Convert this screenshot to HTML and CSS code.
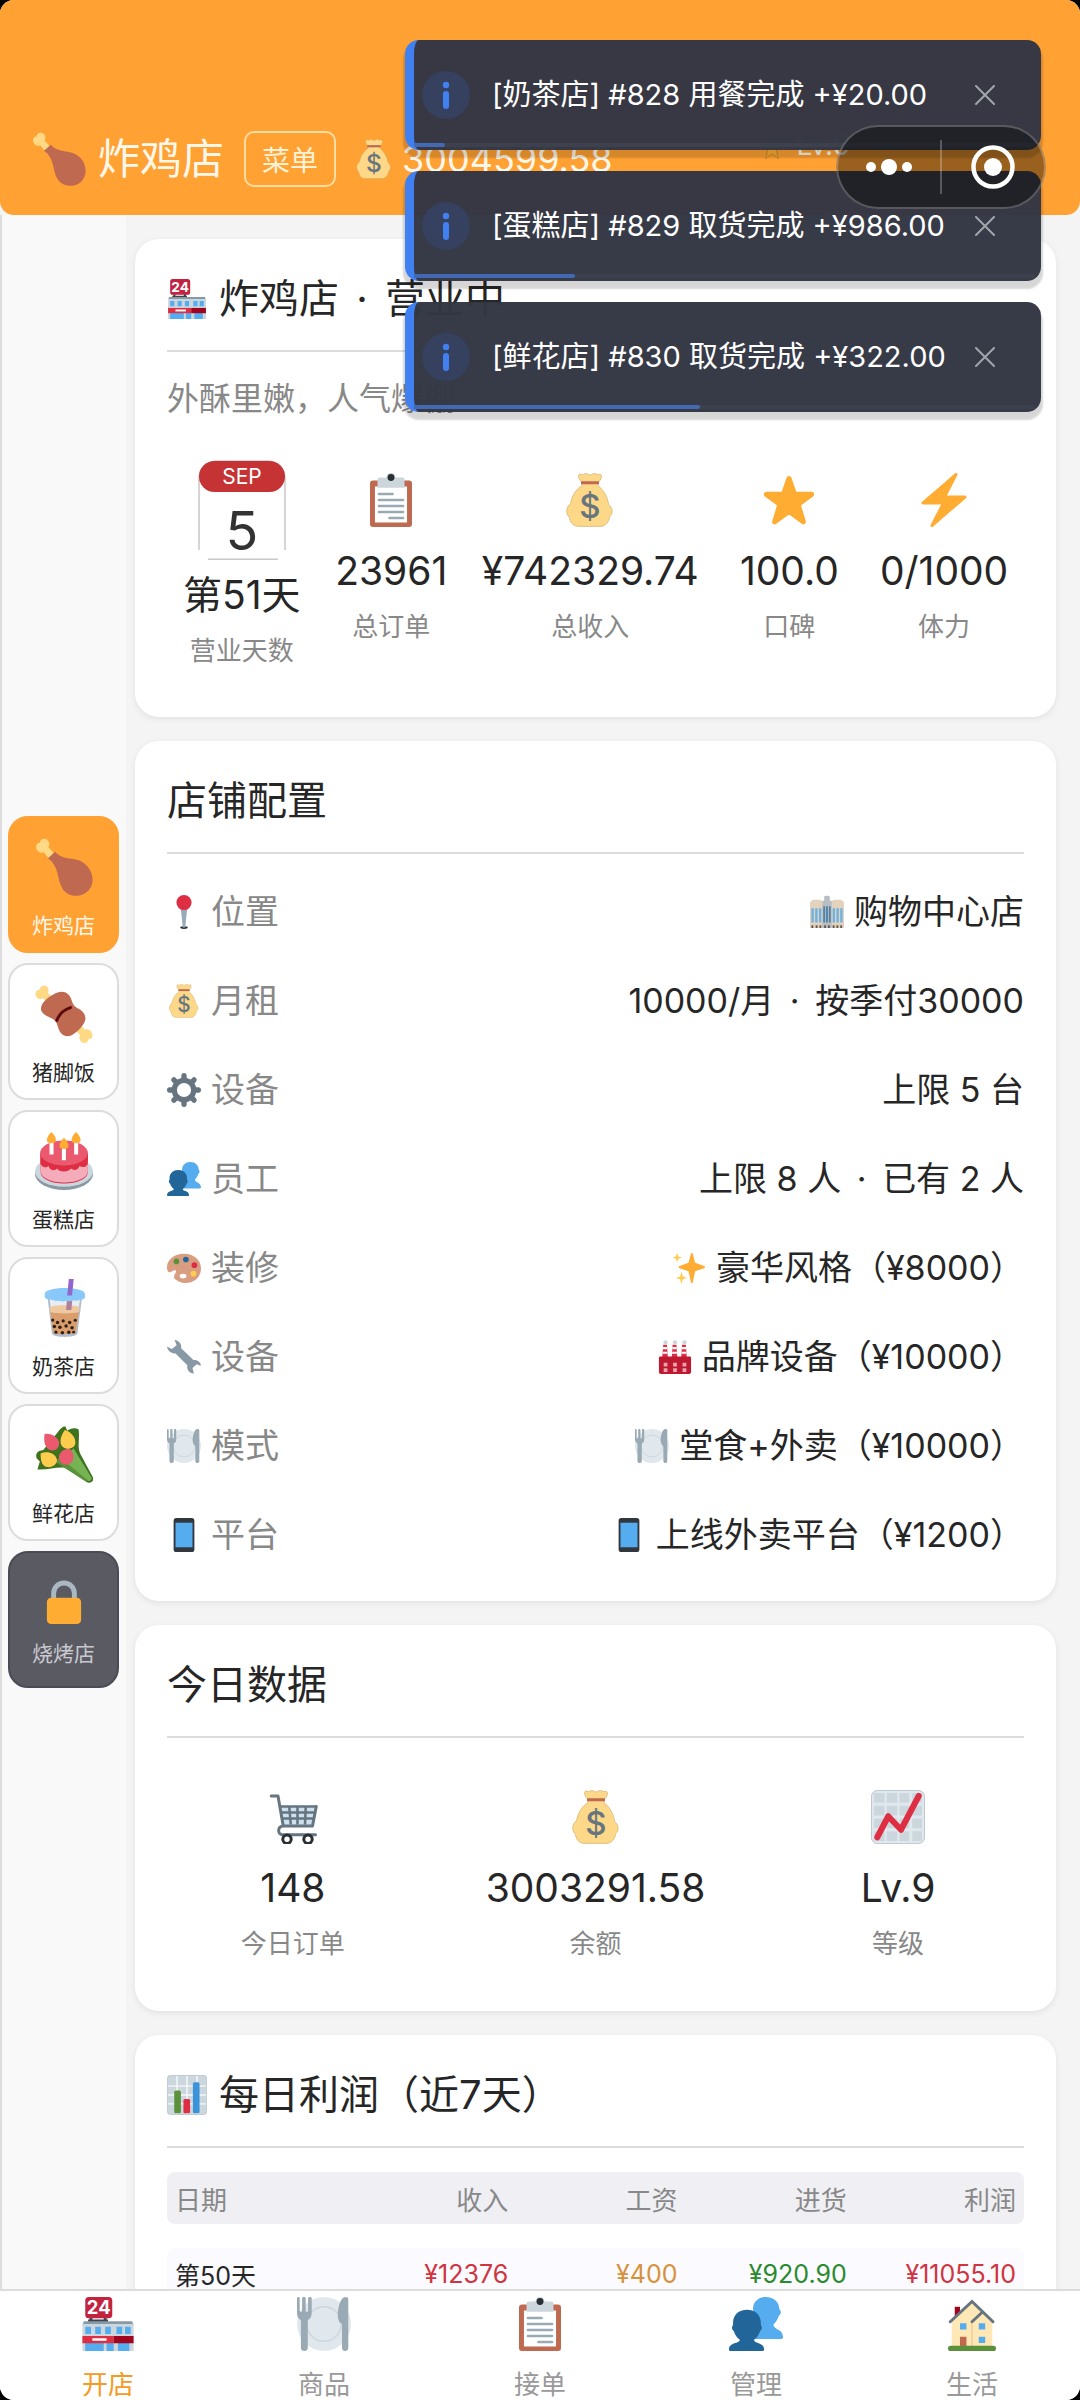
FILE: index.html
```html
<!DOCTYPE html>
<html lang="zh-CN">

<head>
    <meta charset="UTF-8">
    <meta name="viewport" content="width=device-width, initial-scale=1.0">
    <title>炸鸡店 - 营业中</title>
    <link rel="stylesheet" href="styles.css">
</head>

<body>
    <!-- 图标 -->
    <svg class="sprite" aria-hidden="true">
        <symbol id="i-chicken" viewBox="0 0 36 36">
            <path fill="#FFD983" d="M1 7c-1-2 0-4 2-4 0-2.500 3.500-3.500 5-1.500 1.300 1.500 1 3 .3 4.200l6 6.300-3.500 3.500L5.500 8.800C4 9.700 2 9.200 1 7z" />
            <path fill="#BE6950" d="M8 12.500l4.500-4c2 2.500 5 3.600 9 4.300 3 .5 7 .7 10.500 4.200 4 4 5.400 11 1.200 15.600-4.300 4.700-12 4.200-15.600-.4-3-4-2.900-9.700-5-14.200-1-2.200-2.600-4-4.600-5.500z" />
        </symbol>
        <symbol id="i-meat" viewBox="0 0 36 36">
            <path fill="#FFD983" d="M.5 6.800C-.2 4.600 1 3 2.800 3c.2-2.400 3-3.500 4.600-2 1.300 1.200 1.200 2.600.7 3.900L13 10l-3 3.500-5-5.300c-1.600.8-3.800.6-4.500-1.400zM35.500 30.200c.7 2.200-.5 3.500-2.300 3.500-.2 2.300-3 3-4.600 1.300-1.300-1.200-1.200-2.600-.7-3.900L23 26l3-3.500 5 5.300c1.600-.8 3.800.3 4.500 2.400z" />
            <path fill="#BE6950" d="M14 4.700c4-1.700 7.500.6 8.600 4.300.8 2.800 1.600 4.300 4.400 5.700 3.800 1.900 5.400 5.600 3.500 8.900-1.700 2.900-3.900 5.100-7 7.200-3.500 2.400-7.700.4-8.900-3.600-.9-2.900-1.200-4.900-4.300-6.500-3.600-1.900-7.500-3.100-6.400-7.300 1-3.600 6-7.200 10.100-8.700z" />
            <path fill="none" stroke="#5C0A0D" stroke-width="1.800" stroke-linecap="round" d="M13.500 22c1.500-4 4.500-6.700 8.500-8" />
        </symbol>
        <symbol id="i-cake" viewBox="0 0 36 36">
            <ellipse cx="18" cy="26" rx="18" ry="10" fill="#8899A6" />
            <ellipse cx="18" cy="24.500" rx="18" ry="9.500" fill="#CCD6DD" />
            <path fill="#DD2E44" d="M3.500 13v12c0 4 6.500 7 14.500 7s14.800-3 14.800-7V13z" />
            <path fill="#F4ABBA" d="M3.500 18v6.300c0 4 6.500 7 14.500 7s14.800-3 14.800-7V18z" />
            <path fill="#DD2E44" d="M3.300 13v6.500c1 2.500 3.600 3 5.100 1.600 1 3 3.900 3.200 5.300 1.600 1.200 2.400 7.200 2.400 8.600 0 1.800 1.600 4.500 1 5.300-1.600 2 1.400 4.500.5 5.200-1.600V13z" />
            <ellipse cx="18" cy="13" rx="14.800" ry="7.800" fill="#EA596E" />
            <path fill="#FFF" d="M9 6h2.500v8H9zM24.300 6h2.500v8h-2.500zM16.700 9.500h2.500v8h-2.500z" />
            <path fill="#FFAC33" d="M10.200 0c4 4 3.500 7 0 7s-4-3 0-7zM25.500 0c4 4 3.500 7 0 7s-4-3 0-7zM18 3.500c4 4 3.500 7 0 7s-4-3 0-7z" />
        </symbol>
        <symbol id="i-tea" viewBox="0 0 36 36">
            <path fill="#B4BDC6" d="M7.500 9h22l-3.200 25c-1 2.600-14.800 2.600-15.800 0z" />
            <path fill="#E7EDF2" d="M9 12h19l-1.300 10h-16.300z" />
            <path fill="#D99E6B" d="M9.500 19.500c3 1 14.800 1 17.800 0L25.300 33c-2 1.600-12 1.600-14 0z" />
            <path fill="#EEC9A0" d="M9.100 17.500c3-1.600 15.600-1.600 18.600 0l-.4 3c-4 1.200-13.800 1.200-17.800 0z" />
            <path fill="#B07F9B" d="M19.800 13h3.300l-.5 6.200h-3.300z" />
            <g fill="#31201A">
                <circle cx="11" cy="25.500" r="1" /><circle cx="14" cy="27" r="1.100" /><circle cx="17.500" cy="26" r="1" /><circle cx="21.500" cy="27" r="1.100" /><circle cx="25" cy="25.600" r="1" />
                <circle cx="12" cy="29.500" r="1.100" /><circle cx="15.500" cy="30" r="1.100" /><circle cx="19.300" cy="29.200" r="1.100" /><circle cx="23" cy="30.200" r="1.100" /><circle cx="13" cy="33" r="1" />
                <circle cx="17" cy="33.300" r="1.100" /><circle cx="21" cy="33" r="1.100" /><circle cx="24" cy="33" r=".9" />
            </g>
            <path fill="#88C9F9" d="M6 9.500C6 7 11.300 5.600 18.500 5.600S31 7 31 9.500v2.200c-1.500 1.700-2.700 1-4 1.500-1.300.6-3-.2-4.500.4-1.700.6-3-.4-4.600.2-1.400.4-3-.5-4.400-.2-1.600.2-2.700-.8-4-.8-1.600 0-3-.4-3.500-1.600z" />
            <path fill="#9266CC" d="M21 0h3l-1 10.200h-3z" />
        </symbol>
        <symbol id="i-flowers" viewBox="0 0 36 36">
            <path fill="#3E721D" d="M1 20C0 17 2 15 5 15L14 4c2-3 4-4 5-3.500L20 3c2-2 5-2 7-1 1 6-1 10 1 15l8 15c.8 2.500-2 4-4 2.700L19 26c-5-1-11 1.500-17.500 1L3 22z" />
            <path fill="#77B255" d="M14 21l10-7 11 18c.6 2-1.300 2.700-3 1.800z" />
            <path fill="#5C913B" d="M12 22l4-2 17 13.800c-1 .6-2 .3-3-.4z" />
            <path fill="#EA596E" d="M6 5c3-.8 7 1.200 8.500 3.800 1.600 3.300-.8 6.400-3.600 6.400C6.500 15.200 5 10 6 5zM23 16c1.800 3 .8 7.500-3.200 8-3.600.4-5.800-3.400-4.600-6.300C16.500 15 19 14 21.500 14.300z" />
            <path fill="#FFCC4D" d="M18.500 2.500C23 4 25.500 7.500 25 11c-.5 2.800-5 4.200-7.700 2-2.800-2.700-1-7.200 1.200-10.500zM3.500 17c4-1.600 9-.2 10 3.500.9 3.200-3 5.600-6 5C4 24.600 3.500 21 3.500 17z" />
        </symbol>
        <symbol id="i-lock" viewBox="0 0 28 36">
            <path fill="none" stroke="#AAB8C2" stroke-width="4" d="M5.500 17v-6a8.500 8.500 0 0 1 17 0v6" />
            <rect x="0" y="14.500" width="28" height="21.500" rx="3.500" fill="#FFAC33" />
        </symbol>
        <symbol id="i-bag" viewBox="0 0 36 36">
            <path fill="#FDD888" stroke="#C9A861" stroke-width=".4" d="M13 6.500c-2-1.500-3.300-4-2.300-5.500 1-.9 2.200.4 3 0 1.200-.9 2.300-.9 3.300 0 .7.400 1.500.400 2.200 0 1-.9 2.500-.9 3.500 0 .9.300 2-.6 2.700.3.800 1.700-.6 3.800-2.200 5.200l.3 2c4.500 3.500 6.600 9 6.900 12.500 3 2.300 3.100 6.200.8 8-.4 3.500-3 6.600-6 6.600H10.500c-3.600 0-6-2.700-6.200-6C1.500 27 2 22.500 5 20.500c.8-5 3.500-9.500 7.500-12z" />
            <path fill="#BF6952" d="M12 5.500h12v2H12z" />
            <text class="coin" x="18" y="30" text-anchor="middle">$</text>
        </symbol>
        <symbol id="i-store" viewBox="0 0 36 38">
            <path fill="#3B4650" d="M5 14h2v4H5zM15 14h2v4h-2zM4 15.800h14v1.800H4z" />
            <rect x="2" y="0" width="19" height="15" rx="2.500" fill="#C3233F" />
            <text class="sign" x="11.500" y="12.200" text-anchor="middle">24</text>
            <path fill="#8899A6" d="M1 17h34l1 3H0z" />
            <path fill="#CCD6DD" d="M0 19h36v19H0z" />
            <path fill="#55ACEE" d="M2 21h4v5H2zM9 21h4v5H9zM16 21h4v5h-4zM24 21h4v5h-4zM30 21h4v5h-4zM2 32h13v6H2zM17 32h5v6h-5zM25 32h8v6h-8z" />
            <path fill="#DD2E44" d="M0 27.500h22v5H0z" />
            <path fill="#A0041E" d="M22 27.500h14v5H22z" />
            <path fill="#FFF" d="M7 29h10v1.800H7z" />
        </symbol>
        <symbol id="i-calendar" viewBox="0 0 88 112">
            <path fill="none" stroke="#C8C8C8" stroke-width="1.500" d="M1 102V32C1 20 8 13 20 13h48c12 0 19 7 19 19v70M10 111.200h70" />
            <rect x="1" y="13" width="86" height="31" rx="15.500" fill="#C53334" />
            <text class="cal-month" x="44" y="36" text-anchor="middle">SEP</text>
            <text class="cal-day" x="44" y="102" text-anchor="middle">5</text>
        </symbol>
        <symbol id="i-clipboard" viewBox="0 0 36 36">
            <rect x="4" y="5" width="28" height="31" rx="2" fill="#BE6950" />
            <path fill="#FFF" d="M7.300 9h21.400v24H7.300z" />
            <path fill="#CCD6DD" d="M9 4.500c0-1 .6-1.500 1.500-1.500H15a3 3 0 0 1 6 0h4.500c.9 0 1.500.5 1.500 1.500V9.800H9z" />
            <circle cx="18" cy="3" r="2.300" fill="#292F33" />
            <path stroke="#99AAB5" stroke-width="1.800" stroke-linecap="round" d="M10 14h9M10 18h16M10 22h16M10 26h16M17 30h9" />
        </symbol>
        <symbol id="i-star" viewBox="0 0 36 36">
            <path fill="#FFAC33" stroke="#FFAC33" stroke-width="3.500" stroke-linejoin="round" d="M18 3.800l3.600 10.400H33l-9 6.800 3.500 11.500-9.500-7-9.500 7L12 21l-9-6.800h11.400z" />
        </symbol>
        <symbol id="i-bolt" viewBox="0 0 36 36">
            <path fill="#FFAC33" d="M32.938 15.651C32.792 15.260 32.418 15 32 15H19.925L26.890 1.458c.219-.426.106-.947-.271-1.243C26.437.071 26.218 0 26 0c-.233 0-.466.082-.653.243L18 6.588 3.347 19.243c-.316.273-.43.714-.284 1.105S3.582 21 4 21h12.075L9.110 34.542c-.219.426-.106.947.271 1.243.182.144.401.215.619.215.233 0 .466-.082.653-.243L18 29.412l14.653-12.655c.317-.273.430-.714.285-1.106z" />
        </symbol>
        <symbol id="i-pin" viewBox="0 0 36 36">
            <ellipse cx="18" cy="34.500" rx="4" ry="1.500" fill="#292F33" />
            <path fill="#99AAB5" d="M14.700 15h6.600L19.300 34.500h-2.600z" />
            <circle cx="18" cy="8" r="8" fill="#DD2E44" />
        </symbol>
        <symbol id="i-gear" viewBox="0 0 36 36">
            <circle cx="18" cy="18" r="10.300" fill="none" stroke="#66757F" stroke-width="5.600" />
            <path stroke="#66757F" stroke-width="5.600" stroke-linecap="round" d="M18 2.800V6M18 30v3.200M2.800 18H6M30 18h3.200M7.300 7.300l2.200 2.200M26.500 26.500l2.200 2.200M7.300 28.700l2.200-2.200M26.500 9.500l2.200-2.200" />
        </symbol>
        <symbol id="i-people" viewBox="0 0 36 36">
            <path fill="#55ACEE" d="M24.500 0c5.500 0 9 3.500 9 8 1.300 1 1.500 3.200-.2 4.400-.8 2.600-2 4.400-3.700 6 0 3.600 6.400 2.800 6.400 8.400 0 .8-.6 1.200-1.400 1.200H17L16 8c0-4.500 3.500-8 8.500-8z" />
            <path fill="#226699" d="M12 8.500c5.500 0 9.200 3.600 9.200 8.500v1.700c1.200 1.300.7 3.500-.5 4-.6 2.300-2 4.300-4 5.800 0 2.800 6.700 1.500 6.700 6.500 0 .7-.5 1-1.200 1H1.200C.5 36 0 35.700 0 35c0-5 7.200-3.800 7.200-6.500-2-1.500-3.400-3.500-4-5.800-1.200-.5-1.700-2.700-.5-4V17c0-4.900 3.800-8.500 9.300-8.500z" />
        </symbol>
        <symbol id="i-palette" viewBox="0 0 36 36">
            <path fill="#D99E82" d="M18 3C7.600 3 0 9.500 0 17c0 2 .3 4.200 1.500 5.200 2 1.500 4.500-1.600 6.700-1.800 2.500 0 1 3-.2 4.800-1 1.800-.7 3.800 1.500 5.300C12 32.500 15 34 19 34c10 0 17-6.500 17-15.500S28.400 3 18 3z" />
            <circle cx="10" cy="11" r="3" fill="#5C913B" /><circle cx="20" cy="9" r="3" fill="#226699" />
            <circle cx="29" cy="15" r="3" fill="#DD2E44" /><circle cx="28" cy="24" r="3" fill="#FFCC4D" />
            <ellipse cx="17" cy="26.500" rx="3.600" ry="2.500" fill="#FFF" />
        </symbol>
        <symbol id="i-wrench" viewBox="0 0 36 36">
            <path fill="#8899A6" d="M8 0c4.500.5 7.700 4 7 8.700l13 12.500c4-.5 7.500 2 8 6l-4.500-1.600-4.500 4 1.500 5.800c-5-.2-7.700-4-7-8.700L9 14.200C4.600 14.700.6 11.500 0 7l5 2.500 5.200-4z" />
        </symbol>
        <symbol id="i-plate" viewBox="0 0 36 36">
            <circle cx="18" cy="18" r="18" fill="#E1E8ED" />
            <circle cx="18" cy="18" r="11.500" fill="#E1E8ED" stroke="#CCD6DD" stroke-width="1" />
            <path fill="#9AAAB4" d="M0 .8c0-1 1.800-1 1.800 0v8.500c.4.700 1 .7 1.600.4V.8c0-1 2.400-1 2.400 0v8.900c.6.300 1.200.3 1.600-.4V.8c0-1 2.400-1 2.400 0v10c0 2.200-1 3.700-2.600 4.600v18.400c0 2.900-4.600 2.900-4.600 0V15.400C1 14.500 0 13 0 10.800zM34.200 1.500v32.300c0 2.900-4.200 2.900-4.200 0V18c-2.200-1-2.800-3.500-2.800-6 0-5 1.800-12 5-12 1.300 0 2 .5 2 1.500z" />
        </symbol>
        <symbol id="i-phone" viewBox="0 0 36 36">
            <rect x="7" y="0" width="22" height="36" rx="3" fill="#31373D" />
            <path fill="#55ACEE" d="M9 5h18v26H9z" />
        </symbol>
        <symbol id="i-mall" viewBox="0 0 36 36">
            <path fill="#E3D3BE" d="M0 8c1-2 2.500-3 4-3h6c1.500 0 2.500 1 3 2h10c.5-1 1.500-2 3-2h6c1.500 0 3 1 4 3v27H0z" />
            <path fill="#B9BEC2" d="M13 6h2V1.500C16 .5 20 .5 21 1.500V6h2v29H13z" />
            <path fill="#6CB2E2" d="M1.500 14H4v15H1.500zM5.500 14H8v15H5.500zM9.500 14H12v15H9.500zM24 14h2.500v15H24zM28 14h2.500v15H28zM32 14h2.500v15H32z" />
            <path fill="#5283A8" d="M14 12h2v17h-2zM17 12h2v17h-2zM20 12h2v17h-2z" />
            <path fill="#665A50" d="M1.500 32h2v3h-2zM6 32h2v3H6zM10 32h2v3h-2zM15 32h2v3h-2zM19 32h2v3h-2zM24 32h2v3h-2zM28 32h2v3h-2zM32 32h2v3h-2z" />
        </symbol>
        <symbol id="i-sparkle" viewBox="0 0 36 36">
            <path fill="#FFAC33" d="M21 2c.5 0 .9.500 1 1l2.500 9.500L34 15.800c.6.200 1 .6 1 1.200s-.4 1-1 1.200l-9.500 3.300L22 33c-.1.500-.5 1-1 1s-.9-.5-1-1l-2.500-11.500L8 18.200c-.6-.2-1-.6-1-1.200s.4-1 1-1.200l9.500-3.300L20 3c.1-.5.5-1 1-1z" />
            <path fill="#FFCC4D" d="M5.500 2l1.300 3.700L10.500 7 6.800 8.300 5.500 12 4.200 8.300.5 7l3.700-1.300zM10 22l1.500 5 4.500 1.500-4.500 1.500L10 35l-1.500-5L4 28.500 8.500 27z" />
        </symbol>
        <symbol id="i-factory" viewBox="0 0 36 36">
            <path fill="#DD2E44" d="M5.500 5h4l1 14h-6zM15.500 5h4l1 14h-6zM25.500 5h4l1 14h-6z" />
            <path fill="#FFF" d="M5.300 7.500h4.400v2.200H5.300zM5 12.500h5v2H5zM15.300 7.500h4.400v2.200h-4.400zM15 12.500h5v2h-5zM25.300 7.500h4.400v2.200h-4.400zM25 12.500h5v2h-5z" />
            <g fill="#CCD6DD"><circle cx="8" cy="2.500" r="2.300" /><circle cx="18" cy="2.500" r="2.300" /><circle cx="28" cy="2.500" r="2.300" /></g>
            <path fill="#BE1931" d="M1 19c0-1 .7-1.500 1.500-1.500h31c.8 0 1.500.5 1.500 1.500v15c0 1.200-.8 2-2 2H3c-1.200 0-2-.8-2-2z" />
            <path fill="#E8A2AD" d="M6 24h4v4H6zM16 24h4v4h-4zM26 24h4v4h-4zM6 30h4v4H6zM16 30h4v4h-4zM26 30h4v4h-4z" />
        </symbol>
        <symbol id="i-cart" viewBox="0 0 36 36">
            <path fill="#CCE0EE" d="M9.500 10.500H33l-2 13.500H11z" />
            <path fill="none" stroke="#66757F" stroke-width="1.700" d="M10 11h23.500M10.300 15h22.500M10.800 19h21.500M15.500 11l1 12M21 11v12M26.500 11l-.5 12" />
            <path fill="none" stroke="#66757F" stroke-width="2" stroke-linecap="round" stroke-linejoin="round" d="M3.500 4H8l3.500 20H31l2.500-13M11.500 24c-4 0-4 5.800-.5 5.800h22" />
            <g fill="#FFF" stroke="#292F33" stroke-width="2"><circle cx="14" cy="32.800" r="2.800" /><circle cx="28" cy="32.800" r="2.800" /></g>
        </symbol>
        <symbol id="i-trend" viewBox="0 0 36 36">
            <rect x=".3" y=".3" width="35.400" height="35.400" rx="4" fill="#E1E8ED" stroke="#99AAB5" stroke-width=".4" />
            <path fill="#CCD6DD" d="M2 2h7v6.500H2zM10.500 2h7v6.500h-7zM19 2h6.500v6.500H19zM27.500 2h6.500v6.500h-6.500zM2 10.500h7v6.500H2zM10.500 10.500h7v6.500h-7zM19 10.500h6.500v6.500H19zM27.500 10.500h6.500v6.500h-6.500zM2 19h7v6.500H2zM10.500 19h7v6.500h-7zM19 19h6.500v6.500H19zM27.500 19h6.500v6.500h-6.500zM2 27.500h7V34H2zM10.500 27.500h7V34h-7zM19 27.500h6.500V34H19zM27.500 27.500h6.500V34h-6.500z" />
            <path fill="none" stroke="#DD2E44" stroke-width="4" stroke-linecap="round" stroke-linejoin="round" d="M4.200 31.500l7.300-14 8.500 9L31.800 4" />
        </symbol>
        <symbol id="i-bars" viewBox="0 0 36 36">
            <rect x=".3" y=".3" width="35.400" height="35.400" rx="3" fill="#CCD6DD" stroke="#99AAB5" stroke-width=".4" />
            <path stroke="#F5F8FA" stroke-width="1.300" d="M1 10h34M1 18h34M1 26h34M9 1v34M18 1v34M27 1v34" />
            <rect x="6.500" y="14" width="6" height="20.500" rx="1.500" fill="#5C913B" />
            <rect x="14.800" y="21.500" width="6" height="13" rx="1.500" fill="#DD2E44" />
            <rect x="23.300" y="6.500" width="6" height="28" rx="1.500" fill="#3B94D9" />
        </symbol>
        <symbol id="i-house" viewBox="0 0 36 36">
            <path fill="#A0041E" d="M6.500 6.500H10V14H6.500z" />
            <path fill="#FFE8B6" d="M4.500 15.500L18 3l13.500 12.500V33h-27z" />
            <path stroke="#D8C08C" stroke-width=".6" d="M18 17v16" />
            <path fill="none" stroke="#66757F" stroke-width="2" stroke-linecap="round" d="M3.500 16.500L18 3l14 13.500M18 16.500l7-6.500" />
            <path fill="#55ACEE" d="M10 17.500h4.300v4.200H10zM22.500 17.500h4.300v4.200h-4.300zM22.500 26.500h4.300v4.200h-4.300z" />
            <path fill="#C1694F" d="M10 26.500h4.300V33H10z" />
            <rect x="2" y="32.500" width="32" height="3.500" rx="1.700" fill="#5C913B" />
        </symbol>
        <symbol id="i-info" viewBox="0 0 48 48">
            <circle cx="24" cy="24" r="24" fill="#35415F" />
            <circle cx="24" cy="14" r="3.200" fill="#4080F0" />
            <rect x="21" y="20" width="6" height="18" rx="3" fill="#4080F0" />
        </symbol>
        <symbol id="i-close" viewBox="0 0 20 20">
            <path stroke="#A3A5AC" stroke-width="2" stroke-linecap="round" d="M1 1l18 18M19 1L1 19" />
        </symbol>
    </svg>

    <div class="app">
        <!-- 顶部栏 -->
        <header class="topbar">
            <svg class="shop-logo"><use href="#i-chicken" /></svg>
            <h1>炸鸡店</h1>
            <button type="button" class="menu-btn">菜单</button>
            <svg class="bag"><use href="#i-bag" /></svg>
            <span class="balance">3004599.58</span>
            <span class="level">
                <svg viewBox="0 0 20 20"><path fill="#FFAC33" stroke="#B9822F" stroke-width=".7" d="M10 1l2.800 6H19l-5 4.500L16 19l-6-4.500L4 19l2-7.500L1 7h6.200z" /></svg>
                Lv.9
            </span>
        </header>

        <div class="body">
            <!-- 店铺切换 -->
            <aside class="shops">
                <button type="button" class="shop active"><svg><use href="#i-chicken" /></svg>炸鸡店</button>
                <button type="button" class="shop"><svg><use href="#i-meat" /></svg>猪脚饭</button>
                <button type="button" class="shop"><svg><use href="#i-cake" /></svg>蛋糕店</button>
                <button type="button" class="shop"><svg><use href="#i-tea" /></svg>奶茶店</button>
                <button type="button" class="shop"><svg><use href="#i-flowers" /></svg>鲜花店</button>
                <button type="button" class="shop locked"><svg><use href="#i-lock" /></svg>烧烤店</button>
            </aside>

            <main class="content">
                <section class="card">
                    <h2><svg class="store"><use href="#i-store" /></svg>炸鸡店 <span class="dot">·</span> 营业中</h2>
                    <p class="desc">外酥里嫩，人气爆棚</p>
                    <div class="stats">
                        <div class="stat">
                            <svg class="calendar"><use href="#i-calendar" /></svg>
                            <strong>第51天</strong>
                            <span>营业天数</span>
                        </div>
                        <div class="stat">
                            <svg><use href="#i-clipboard" /></svg>
                            <strong>23961</strong>
                            <span>总订单</span>
                        </div>
                        <div class="stat">
                            <svg><use href="#i-bag" /></svg>
                            <strong>¥742329.74</strong>
                            <span>总收入</span>
                        </div>
                        <div class="stat">
                            <svg><use href="#i-star" /></svg>
                            <strong>100.0</strong>
                            <span>口碑</span>
                        </div>
                        <div class="stat">
                            <svg><use href="#i-bolt" /></svg>
                            <strong>0/1000</strong>
                            <span>体力</span>
                        </div>
                    </div>
                </section>

                <section class="card">
                    <h2>店铺配置</h2>
                    <dl class="config">
                        <div><dt><svg><use href="#i-pin" /></svg>位置</dt><dd><svg><use href="#i-mall" /></svg>购物中心店</dd></div>
                        <div><dt><svg><use href="#i-bag" /></svg>月租</dt><dd>10000/月 <span class="dot">·</span> 按季付30000</dd></div>
                        <div><dt><svg><use href="#i-gear" /></svg>设备</dt><dd>上限 5 台</dd></div>
                        <div><dt><svg><use href="#i-people" /></svg>员工</dt><dd>上限 8 人 <span class="dot">·</span> 已有 2 人</dd></div>
                        <div><dt><svg><use href="#i-palette" /></svg>装修</dt><dd><svg><use href="#i-sparkle" /></svg>豪华风格（¥8000）</dd></div>
                        <div><dt><svg><use href="#i-wrench" /></svg>设备</dt><dd><svg><use href="#i-factory" /></svg>品牌设备（¥10000）</dd></div>
                        <div><dt><svg><use href="#i-plate" /></svg>模式</dt><dd><svg><use href="#i-plate" /></svg>堂食+外卖（¥10000）</dd></div>
                        <div><dt><svg><use href="#i-phone" /></svg>平台</dt><dd><svg><use href="#i-phone" /></svg>上线外卖平台（¥1200）</dd></div>
                    </dl>
                </section>

                <section class="card">
                    <h2>今日数据</h2>
                    <div class="stats today">
                        <div class="stat">
                            <svg><use href="#i-cart" /></svg>
                            <strong>148</strong>
                            <span>今日订单</span>
                        </div>
                        <div class="stat">
                            <svg><use href="#i-bag" /></svg>
                            <strong>3003291.58</strong>
                            <span>余额</span>
                        </div>
                        <div class="stat">
                            <svg><use href="#i-trend" /></svg>
                            <strong>Lv.9</strong>
                            <span>等级</span>
                        </div>
                    </div>
                </section>

                <section class="card">
                    <h2><svg><use href="#i-bars" /></svg>每日利润（近7天）</h2>
                    <table class="profit">
                        <thead>
                            <tr>
                                <th>日期</th>
                                <th>收入</th>
                                <th>工资</th>
                                <th>进货</th>
                                <th>利润</th>
                            </tr>
                        </thead>
                        <tbody>
                            <tr>
                                <td>第50天</td>
                                <td class="red">¥12376</td>
                                <td class="amber">¥400</td>
                                <td class="green">¥920.90</td>
                                <td class="red">¥11055.10</td>
                            </tr>
                        </tbody>
                    </table>
                </section>
            </main>
        </div>

        <!-- 底部导航 -->
        <nav class="tabbar">
            <a href="#open" class="active"><svg><use href="#i-store" /></svg>开店</a>
            <a href="#goods"><svg><use href="#i-plate" /></svg>商品</a>
            <a href="#orders"><svg><use href="#i-clipboard" /></svg>接单</a>
            <a href="#manage"><svg><use href="#i-people" /></svg>管理</a>
            <a href="#life"><svg><use href="#i-house" /></svg>生活</a>
        </nav>
    </div>

    <!-- 消息提示 -->
    <div class="toasts" role="status">
        <div class="toast">
            <svg class="info"><use href="#i-info" /></svg>
            <span>[奶茶店] #828 用餐完成 +¥20.00</span>
            <button type="button" aria-label="关闭"><svg><use href="#i-close" /></svg></button>
            <div class="bar"><i style="width: 5%"></i></div>
        </div>
        <div class="toast">
            <svg class="info"><use href="#i-info" /></svg>
            <span>[蛋糕店] #829 取货完成 +¥986.00</span>
            <button type="button" aria-label="关闭"><svg><use href="#i-close" /></svg></button>
            <div class="bar"><i style="width: 26%"></i></div>
        </div>
        <div class="toast">
            <svg class="info"><use href="#i-info" /></svg>
            <span>[鲜花店] #830 取货完成 +¥322.00</span>
            <button type="button" aria-label="关闭"><svg><use href="#i-close" /></svg></button>
            <div class="bar"><i style="width: 46%"></i></div>
        </div>
    </div>

    <!-- 小程序胶囊按钮 -->
    <div class="capsule">
        <button type="button" aria-label="更多">
            <svg viewBox="0 0 46 44"><g fill="#FFF"><circle cx="5" cy="22" r="5" /><circle cx="23" cy="22" r="8" /><circle cx="41" cy="22" r="5" /></g></svg>
        </button>
        <button type="button" aria-label="退出">
            <svg viewBox="0 0 46 44"><circle cx="23" cy="22" r="19.500" fill="none" stroke="#FFF" stroke-width="4.500" /><circle cx="23" cy="22" r="9" fill="#FFF" /></svg>
        </button>
    </div>
</body>

</html>
```

FILE: styles.css
```css
* {
    box-sizing: border-box;
}

body {
    margin: 0;
    background-color: #000;
    color: #262626;
    font-family: Inter, "Noto Sans CJK SC", sans-serif;
    font-size: 34px;
}

button {
    font-family: inherit;
    margin: 0;
    padding: 0;
    cursor: pointer;
}

svg {
    display: block;
    flex: none;
}

.sprite {
    display: none;
}

.dot {
    margin: 0 6px;
}

/* 图标里的文字 */
.coin {
    font-size: 22px;
    font-weight: 500;
    fill: #67757f;
}

.sign {
    font-size: 13px;
    font-weight: 700;
    fill: #fff;
}

.cal-month {
    font-size: 21px;
    fill: #fff;
}

.cal-day {
    font-size: 54px;
    fill: #333;
}

.app {
    height: 100vh;
    display: flex;
    flex-direction: column;
    background-color: #f4f4f4;
    border-radius: 14px;
    overflow: hidden;
}

/* 顶部栏 */
.topbar {
    flex: none;
    display: flex;
    align-items: center;
    padding: 130px 32px 27px;
    background-color: #ffa133;
    border-radius: 0 0 14px 14px;
    color: #fff8ea;
}

.topbar h1 {
    margin: 0 20px 0 12px;
    font-size: 42px;
    font-weight: 400;
    line-height: 58px;
}

.shop-logo {
    width: 54px;
    height: 54px;
}

.menu-btn {
    height: 56px;
    padding: 0 16px;
    border: 2px solid #ffdc9f;
    border-radius: 10px;
    background: none;
    color: #fff1d6;
    font-size: 28px;
}

.bag {
    width: 40px;
    height: 40px;
    margin: 0 8px 0 18px;
}

.balance {
    font-size: 36px;
}

.level {
    display: flex;
    align-items: flex-end;
    gap: 14px;
    margin: 0 0 28px 148px;
    font-size: 28px;
    line-height: 30px;
}

.level svg {
    width: 22px;
    height: 22px;
}

.body {
    flex: 1;
    min-height: 0;
    display: flex;
}

/* 店铺切换 */
.shops {
    flex: none;
    width: 126px;
    display: flex;
    flex-direction: column;
    justify-content: center;
    gap: 10px;
    padding: 0 7px 0 6px;
    border-left: 2px solid #ddd;
    background-color: #f9f9f9;
}

.shop {
    display: flex;
    flex-direction: column;
    align-items: center;
    justify-content: center;
    gap: 16px;
    height: 137px;
    padding-top: 8px;
    border: 2px solid #dcdcdc;
    border-radius: 20px;
    background-color: #fff;
    color: #262626;
    font-size: 21px;
    line-height: 28px;
}

.shop svg {
    width: 58px;
    height: 58px;
}

.shop.active {
    border-color: #ffa133;
    background-color: #ffa133;
    color: #fff8ea;
}

.shop.locked {
    border-color: #4b4b55;
    background-color: #5a5a63;
    color: #c9c9cf;
}

.shop.locked svg {
    width: 36px;
    height: 44px;
}

/* 内容 */
.content {
    flex: 1;
    min-width: 0;
    display: flex;
    flex-direction: column;
    gap: 24px;
    padding: 24px 24px 24px 9px;
    overflow-y: auto;
    scrollbar-width: none;
}

.card {
    flex: none;
    padding: 32px 32px 22px;
    border-radius: 24px;
    background-color: #fff;
    box-shadow: 0 2px 6px rgba(0, 0, 0, 0.08);
}

.card h2 {
    display: flex;
    align-items: center;
    margin: 0;
    padding-bottom: 24px;
    border-bottom: 2px solid #dcdcdc;
    font-size: 40px;
    font-weight: 400;
    line-height: 55px;
    white-space: pre;
}

.card h2 svg {
    width: 40px;
    height: 40px;
    margin-right: 12px;
}

.desc {
    margin: 24px 0 0;
    color: #888;
    font-size: 32px;
    line-height: 46px;
}

.stats {
    display: flex;
    align-items: center;
    justify-content: space-around;
    padding: 26px 0 27px;
}

.stats.today {
    padding: 52px 0 28px;
}

.stat {
    display: flex;
    flex-direction: column;
    align-items: center;
    min-width: 118px;
}

.stat svg {
    width: 54px;
    height: 54px;
    margin-bottom: 17px;
}

.stat .calendar {
    width: 88px;
    height: 112px;
    margin-bottom: 8px;
}

.stat strong {
    margin-bottom: 12px;
    font-size: 39px;
    font-weight: 400;
    line-height: 54px;
}

.stat span {
    color: #888;
    font-size: 26px;
    line-height: 34px;
}

/* 店铺配置 */
.config {
    margin: 0;
    padding-top: 13px;
}

.config div {
    display: flex;
    justify-content: space-between;
    padding: 20px 0;
    line-height: 49px;
}

.config dt,
.config dd {
    display: flex;
    align-items: center;
    margin: 0;
    white-space: pre;
}

.config dt {
    color: #888;
}

.config svg {
    width: 34px;
    height: 34px;
    margin-right: 10px;
}

/* 每日利润 */
.profit {
    width: 100%;
    table-layout: fixed;
    border-collapse: separate;
    border-spacing: 0 24px;
    font-size: 25px;
}

.profit th,
.profit td {
    height: 52px;
    padding: 0 8px;
    text-align: right;
    background-color: #fafaff;
}

.profit th {
    background-color: #efeff4;
    color: #888;
    font-size: 26px;
    font-weight: 400;
}

.profit th:first-child,
.profit td:first-child {
    width: 21%;
    text-align: left;
    border-radius: 8px 0 0 8px;
}

.profit th:last-child,
.profit td:last-child {
    border-radius: 0 8px 8px 0;
}

.profit .red {
    color: #cf3540;
}

.profit .amber {
    color: #d6923a;
}

.profit .green {
    color: #2a8a2e;
}

/* 底部导航 */
.tabbar {
    flex: none;
    display: flex;
    border-top: 2px solid #dcdcdc;
    background-color: #fff;
}

.tabbar a {
    flex: 1;
    display: flex;
    flex-direction: column;
    align-items: center;
    gap: 18px;
    padding-top: 6px;
    color: #999;
    font-size: 26px;
    line-height: 31px;
    text-decoration: none;
}

.tabbar a.active {
    color: #f59a23;
}

.tabbar svg {
    width: 54px;
    height: 54px;
}

/* 消息提示 */
.toasts {
    position: absolute;
    top: 40px;
    right: 39px;
    width: 636px;
    display: flex;
    flex-direction: column;
    gap: 21px;
}

.toast {
    position: relative;
    display: flex;
    align-items: center;
    height: 110px;
    padding: 0 46px 0 8px;
    border-left: 9px solid #4080f0;
    border-radius: 14px;
    background-color: rgba(51, 54, 67, 0.98);
    box-shadow: 0 6px 2px 2px rgba(0, 0, 0, 0.16);
    color: #fff;
    font-size: 29px;
    line-height: 40px;
    white-space: nowrap;
}

.toast .info {
    width: 48px;
    height: 48px;
    margin-right: 22px;
}

.toast button {
    margin-left: auto;
    border: none;
    background: none;
}

.toast button svg {
    width: 20px;
    height: 20px;
}

.bar {
    position: absolute;
    left: 0;
    right: 6px;
    bottom: 3px;
    height: 4px;
    background-color: #3d404d;
}

.bar i {
    display: block;
    height: 4px;
    border-radius: 0 2px 2px 0;
    background-color: #4469b3;
}

/* 胶囊按钮 */
.capsule {
    position: absolute;
    top: 125px;
    right: 34px;
    display: flex;
    align-items: center;
    width: 210px;
    height: 84px;
    border: 2px solid rgba(255, 255, 255, 0.25);
    border-radius: 42px;
    background-color: rgba(0, 0, 0, 0.4);
}

.capsule button {
    flex: 1;
    display: flex;
    align-items: center;
    justify-content: center;
    height: 54px;
    border: none;
    background: none;
}

.capsule button + button {
    border-left: 2px solid rgba(255, 255, 255, 0.25);
}

.capsule svg {
    width: 46px;
    height: 44px;
}
```
